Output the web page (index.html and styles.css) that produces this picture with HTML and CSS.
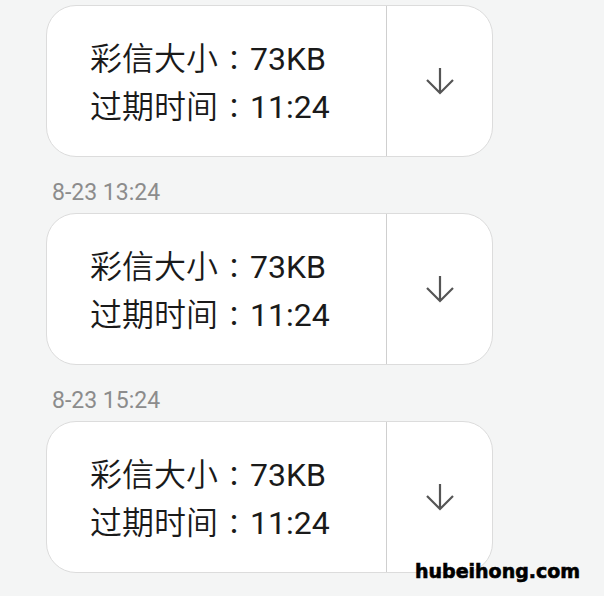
FILE: index.html
```html
<!DOCTYPE html>
<html lang="zh-CN">
  <head>
    <meta charset="UTF-8" />
    <meta name="viewport" content="width=device-width, initial-scale=1.0" />
    <title>彩信</title>
    <link rel="stylesheet" href="styles.css">
  </head>
  <body>
    <div class="thread">
      <div class="mms-card">
        <div class="mms-info">
          <div class="mms-line">彩信大小<span class="colon" lang="zh-TW">：</span><span class="value">73KB</span></div>
          <div class="mms-line">过期时间<span class="colon" lang="zh-TW">：</span><span class="value">11:24</span></div>
        </div>
        <div class="mms-download">
          <svg class="arrow" width="30" height="30" viewBox="0 0 30 30">
            <path d="M15 2 V27 M2 14 L15 27 L28 14" />
          </svg>
        </div>
      </div>

      <div class="timestamp">8-23 13:24</div>
      <div class="mms-card">
        <div class="mms-info">
          <div class="mms-line">彩信大小<span class="colon" lang="zh-TW">：</span><span class="value">73KB</span></div>
          <div class="mms-line">过期时间<span class="colon" lang="zh-TW">：</span><span class="value">11:24</span></div>
        </div>
        <div class="mms-download">
          <svg class="arrow" width="30" height="30" viewBox="0 0 30 30">
            <path d="M15 2 V27 M2 14 L15 27 L28 14" />
          </svg>
        </div>
      </div>

      <div class="timestamp">8-23 15:24</div>
      <div class="mms-card">
        <div class="mms-info">
          <div class="mms-line">彩信大小<span class="colon" lang="zh-TW">：</span><span class="value">73KB</span></div>
          <div class="mms-line">过期时间<span class="colon" lang="zh-TW">：</span><span class="value">11:24</span></div>
        </div>
        <div class="mms-download">
          <svg class="arrow" width="30" height="30" viewBox="0 0 30 30">
            <path d="M15 2 V27 M2 14 L15 27 L28 14" />
          </svg>
        </div>
      </div>
    </div>

    <div class="watermark">hubeihong.com</div>
  </body>
</html>
```

FILE: styles.css
```css
body {
  margin: 0;
  background-color: #f4f5f5;
  font-family: Roboto, "Noto Sans CJK SC", sans-serif;
  overflow: hidden;
}
.thread {
  display: flex;
  flex-direction: column;
  padding: 5px 0 0 46px;
}
.mms-card {
  display: flex;
  width: 447px;
  height: 152px;
  box-sizing: border-box;
  background-color: #fff;
  border: 1px solid #dcdcdc;
  border-radius: 30px;
}
.mms-info {
  flex: 1;
  display: flex;
  flex-direction: column;
  justify-content: center;
  padding-left: 43px;
  padding-top: 3px;
}
.mms-line {
  font-size: 32px;
  font-weight: 350;
  line-height: 48px;
  color: #1a1a1a;
}
.colon {
  display: inline-block;
  width: 32px;
  text-align: center;
  font-family: "Noto Sans CJK TC", sans-serif;
  font-size: 27px;
  font-weight: 400;
}
.value {
  font-weight: 400;
}
.mms-download {
  width: 105px;
  border-left: 1px solid #cfcfcf;
  display: flex;
  align-items: center;
  justify-content: center;
}
.arrow {
  fill: none;
  stroke: #555;
  stroke-width: 2.2;
}
.timestamp {
  font-size: 23px;
  line-height: 26px;
  color: #8c8c8c;
  margin: 23px 0 7px 6px;
}
.watermark {
  position: absolute;
  left: 415px;
  top: 560px;
  font-family: "DejaVu Sans", sans-serif;
  font-weight: bold;
  font-size: 19px;
  line-height: 22px;
  color: #000;
  -webkit-text-stroke: 0.6px #000;
}
```
